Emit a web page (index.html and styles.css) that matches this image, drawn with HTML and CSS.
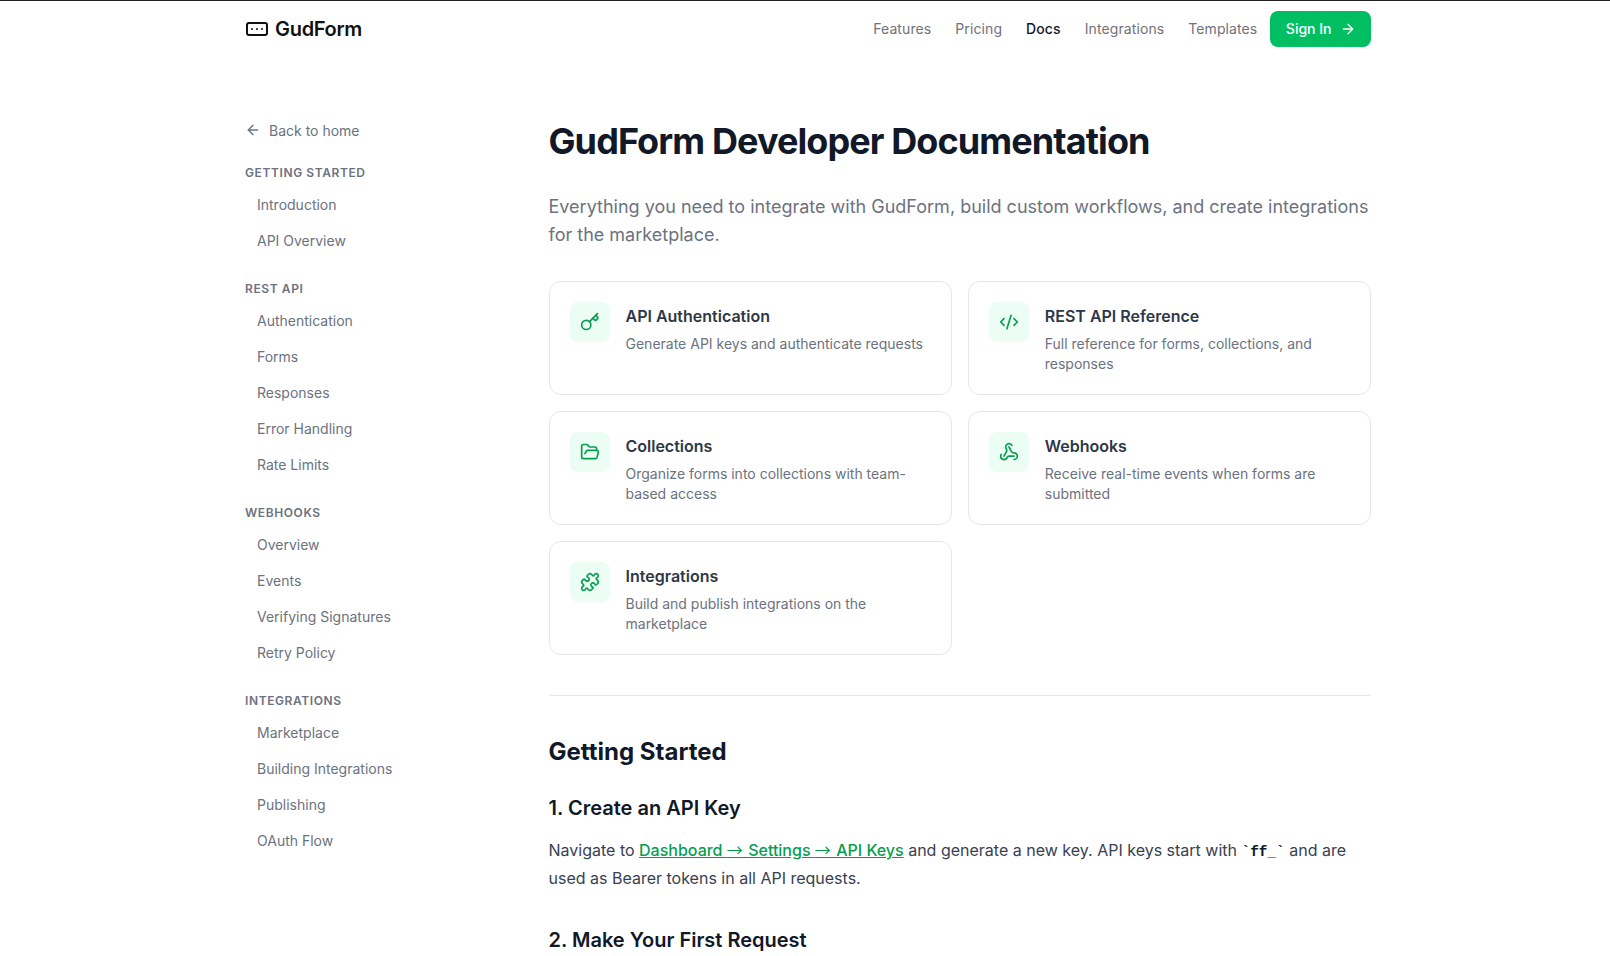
FILE: index.html
```html
<!DOCTYPE html>
<html lang="en">
<head>
<meta charset="utf-8">
<title>GudForm Developer Documentation</title>
<link rel="stylesheet" href="styles.css">
</head>
<body>
<div class="page">
<header class="topbar">
  <a class="logo" href="#">
    <svg class="logo-icon" viewBox="0 0 24 24"><rect width="20" height="12" x="2" y="6" rx="2"/><path d="M12 12h.01"/><path d="M17 12h.01"/><path d="M7 12h.01"/></svg>
    <span>GudForm</span>
  </a>
  <nav class="topnav">
    <a href="#">Features</a>
    <a href="#">Pricing</a>
    <a href="#" class="active">Docs</a>
    <a href="#">Integrations</a>
    <a href="#">Templates</a>
    <a href="#" class="signin">Sign In <svg class="ico16" viewBox="0 0 24 24"><path d="M5 12h14"/><path d="m12 5 7 7-7 7"/></svg></a>
  </nav>
</header>
<div class="layout">
  <aside class="sidebar">
    <a class="back" href="#"><svg class="ico16" viewBox="0 0 24 24"><path d="m12 19-7-7 7-7"/><path d="M19 12H5"/></svg>Back to home</a>
    <div class="group">
      <h4>Getting Started</h4>
      <a href="#">Introduction</a>
      <a href="#">API Overview</a>
    </div>
    <div class="group">
      <h4>REST API</h4>
      <a href="#">Authentication</a>
      <a href="#">Forms</a>
      <a href="#">Responses</a>
      <a href="#">Error Handling</a>
      <a href="#">Rate Limits</a>
    </div>
    <div class="group">
      <h4>Webhooks</h4>
      <a href="#">Overview</a>
      <a href="#">Events</a>
      <a href="#">Verifying Signatures</a>
      <a href="#">Retry Policy</a>
    </div>
    <div class="group">
      <h4>Integrations</h4>
      <a href="#">Marketplace</a>
      <a href="#">Building Integrations</a>
      <a href="#">Publishing</a>
      <a href="#">OAuth Flow</a>
    </div>
  </aside>
  <main class="content">
    <h1>GudForm Developer Documentation</h1>
    <p class="lede">Everything you need to integrate with GudForm, build custom workflows, and create integrations for the marketplace.</p>
    <div class="cards">
      <a class="card" href="#">
        <span class="card-icon"><svg class="ico20" viewBox="0 0 24 24"><path d="m15.5 7.5 2.3 2.3a1 1 0 0 0 1.4 0l2.1-2.1a1 1 0 0 0 0-1.4L19 4"/><path d="m21 2-9.6 9.6"/><circle cx="7.5" cy="15.5" r="5.5"/></svg></span>
        <span class="card-body"><strong>API Authentication</strong><span>Generate API keys and authenticate requests</span></span>
      </a>
      <a class="card" href="#">
        <span class="card-icon"><svg class="ico20" viewBox="0 0 24 24"><path d="m18 16 4-4-4-4"/><path d="m6 8-4 4 4 4"/><path d="m14.5 4-5 16"/></svg></span>
        <span class="card-body"><strong>REST API Reference</strong><span>Full reference for forms, collections, and responses</span></span>
      </a>
      <a class="card" href="#">
        <span class="card-icon"><svg class="ico20" viewBox="0 0 24 24"><path d="m6 14 1.5-2.9A2 2 0 0 1 9.24 10H20a2 2 0 0 1 1.94 2.5l-1.54 6a2 2 0 0 1-1.95 1.5H4a2 2 0 0 1-2-2V5a2 2 0 0 1 2-2h3.9a2 2 0 0 1 1.69.9l.81 1.2a2 2 0 0 0 1.67.9H18a2 2 0 0 1 2 2v2"/></svg></span>
        <span class="card-body"><strong>Collections</strong><span>Organize forms into collections with team-based access</span></span>
      </a>
      <a class="card" href="#">
        <span class="card-icon"><svg class="ico20" viewBox="0 0 24 24"><path d="M18 16.98h-5.99c-1.1 0-1.95.94-2.48 1.9A4 4 0 0 1 2 17c.01-.7.2-1.4.57-2"/><path d="m6 17 3.13-5.78c.53-.97.1-2.18-.5-3.1a4 4 0 1 1 6.89-4.06"/><path d="m12 6 3.13 5.73C15.66 12.7 16.9 13 18 13a4 4 0 0 1 0 8"/></svg></span>
        <span class="card-body"><strong>Webhooks</strong><span>Receive real-time events when forms are submitted</span></span>
      </a>
      <a class="card" href="#">
        <span class="card-icon"><svg class="ico20" viewBox="0 0 24 24"><path d="M19.439 7.85c-.049.322.059.648.289.878l1.568 1.568c.47.47.706 1.087.706 1.704s-.235 1.233-.706 1.704l-1.611 1.611a.98.98 0 0 1-.837.276c-.47-.07-.802-.48-.968-.925a2.501 2.501 0 1 0-3.214 3.214c.446.166.855.497.925.968a.979.979 0 0 1-.276.837l-1.61 1.61a2.404 2.404 0 0 1-1.705.707 2.402 2.402 0 0 1-1.704-.706l-1.568-1.568a1.026 1.026 0 0 0-.877-.29c-.493.074-.84.504-1.02.968a2.5 2.5 0 1 1-3.237-3.237c.464-.18.894-.527.967-1.02a1.026 1.026 0 0 0-.289-.877l-1.568-1.568A2.402 2.402 0 0 1 1.998 12c0-.617.236-1.234.706-1.704L4.23 8.77c.24-.24.581-.353.917-.303.515.077.877.528 1.073 1.01a2.5 2.5 0 1 0 3.259-3.259c-.482-.196-.933-.558-1.01-1.073-.05-.336.062-.676.303-.917l1.525-1.525A2.402 2.402 0 0 1 12 1.998c.617 0 1.234.236 1.704.706l1.568 1.568c.23.23.556.338.877.29.493-.074.84-.504 1.02-.968a2.5 2.5 0 1 1 3.237 3.237c-.464.18-.894.527-.967 1.02Z"/></svg></span>
        <span class="card-body"><strong>Integrations</strong><span>Build and publish integrations on the marketplace</span></span>
      </a>
    </div>
    <hr class="rule">
    <h2>Getting Started</h2>
    <h3>1. Create an API Key</h3>
    <p class="para">Navigate to <a href="#">Dashboard <span class="arrow">→</span> Settings <span class="arrow">→</span> API Keys</a> and generate a new key. API keys start with <code>`ff_`</code> and are used as Bearer tokens in all API requests.</p>
    <h3 class="h3-next">2. Make Your First Request</h3>
  </main>
</div>
</div>
</body>
</html>
```
FILE: styles.css
```css
* { box-sizing: border-box; }
html, body { margin: 0; padding: 0; background: #fff; }
body { font-family: Inter, "Liberation Sans", sans-serif; color: #111827; overflow: hidden; height: 956px; }
a { text-decoration: none; color: inherit; }
svg { fill: none; stroke: currentColor; stroke-width: 2; stroke-linecap: round; stroke-linejoin: round; flex: none; }
.ico16 { width: 16px; height: 16px; }
.ico20 { width: 20px; height: 20px; }
.page { border-top: 1px solid #222; margin: 0; }
.topbar, .layout { width: 1126px; margin-left: 245px; }
.topbar { height: 55px; display: flex; align-items: center; justify-content: space-between; }
.logo { display: flex; align-items: center; gap: 6px; font-size: 20px; font-weight: 600; color: #111; letter-spacing: -0.015em; }
.logo-icon { width: 24px; height: 24px; }
.topnav { display: flex; align-items: center; gap: 24px; font-size: 14px; color: #71717a; letter-spacing: 0.1px; }
.topnav .active { color: #111827; font-weight: 500; }
.topnav .signin { display: flex; align-items: center; gap: 8px; height: 36px; padding: 0 15.5px; margin-left: -11px; border-radius: 8px; background: #00bf63; color: #fff; font-weight: 500; letter-spacing: 0; }
.layout { display: flex; padding-top: 64px; }
.sidebar { width: 303.5px; flex: none; font-size: 14px; color: #6b7280; }
.back { display: flex; align-items: center; gap: 8px; height: 20px; margin-bottom: 25px; }
.group { margin-bottom: 22px; display: flex; flex-direction: column; }
.group h4 { margin: 0 0 6px; font-size: 12px; line-height: 16px; font-weight: 600; letter-spacing: 0.05em; text-transform: uppercase; color: #6b7280; }
.group a { padding: 8px 12px; line-height: 20px; }
.content { width: 822.5px; flex: none; padding-top: 1px; }
h1 { margin: 0 0 32px; font-size: 36px; line-height: 40px; font-weight: 700; letter-spacing: -0.025em; color: #111827; }
.lede { margin: 0 0 32px; font-size: 18px; line-height: 28px; color: #6b7280; }
.cards { display: grid; grid-template-columns: 1fr 1fr; gap: 16px; }
.card { display: flex; gap: 16px; padding: 20px; height: 114px; border: 1px solid #e5e7eb; border-radius: 12px; background: #fff; }
.card-icon { width: 40px; height: 40px; flex: none; display: flex; align-items: center; justify-content: center; border-radius: 8px; background: #ecfdf5; color: #059e4f; }
.card-body { display: flex; flex-direction: column; padding-top: 2px; font-size: 14px; line-height: 20px; color: #6b7280; }
.card-body strong { font-size: 16px; line-height: 24px; font-weight: 600; color: #2d3748; margin-bottom: 6px; }
.rule { margin: 40px 0; border: 0; border-top: 1px solid #e5e7eb; }
h2 { margin: 0 0 26px; font-size: 24px; line-height: 32px; font-weight: 700; color: #111827; }
h3 { margin: 0 0 14px; font-size: 20px; line-height: 28px; font-weight: 600; color: #111827; }
.para { margin: 0; font-size: 16px; line-height: 28px; color: #374151; }
.para a { color: #059e4f; text-decoration: underline; font-weight: 500; }
.arrow { font-family: "Noto Sans CJK SC", sans-serif; font-weight: 400; line-height: 1; letter-spacing: 1.1px; }
code { font-family: "Liberation Mono", monospace; font-size: 14.4px; font-weight: 700; line-height: 1; color: #111827; }
.h3-next { margin-top: 34px; }
```
